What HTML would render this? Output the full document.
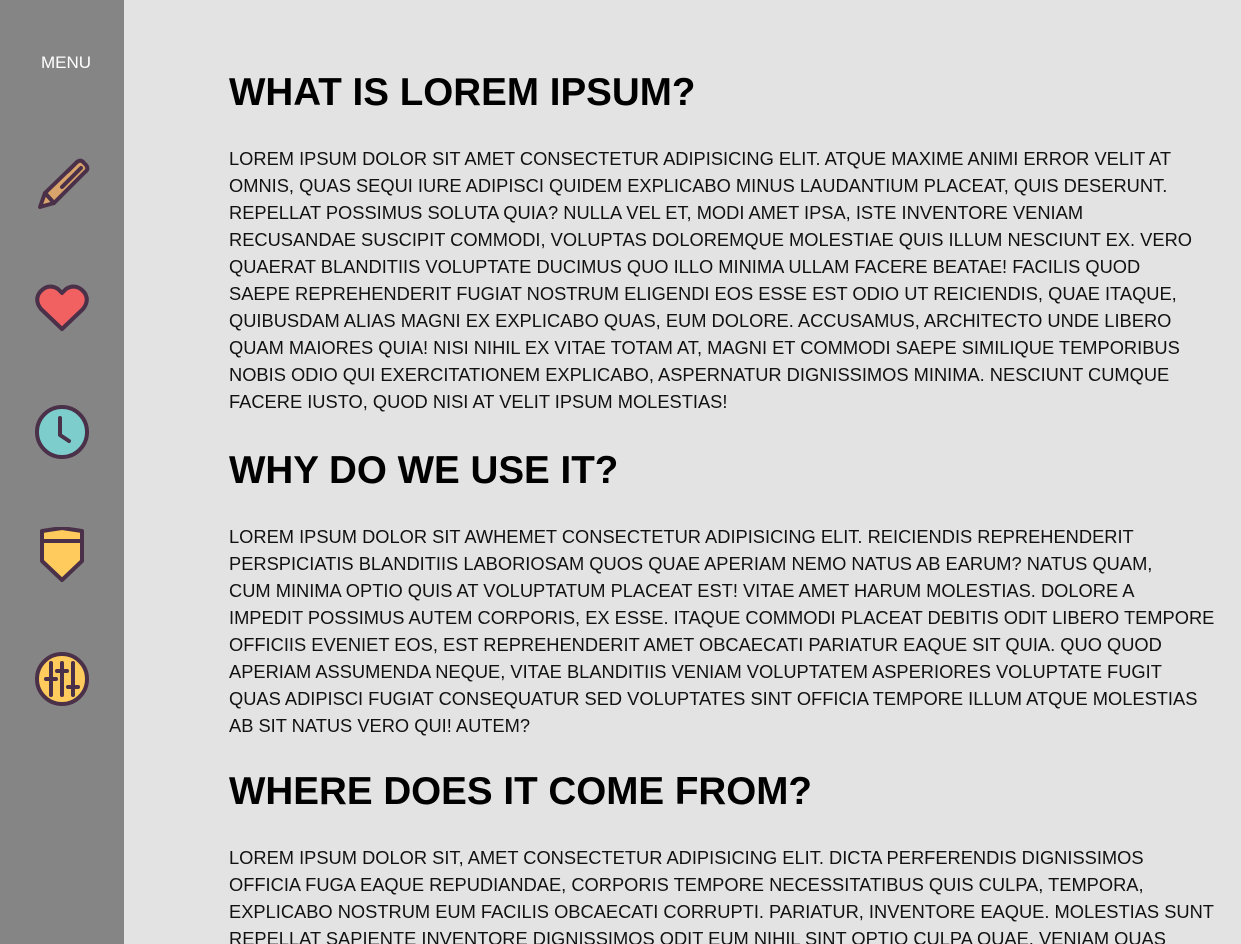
<!DOCTYPE html><html style="overflow:hidden"><head><style>
body{margin:0;width:1241px;height:944px;overflow:hidden;background:#e3e3e3;font-family:"Liberation Sans",sans-serif;color:#111;position:relative}
.side{position:absolute;left:0;top:0;width:124px;height:944px;background:#858585}
.menu{position:absolute;left:0;width:132px;top:53px;text-align:center;color:#fff;font-size:17px}
.ic{position:absolute;left:34px;width:56px;height:56px}
h1{position:absolute;left:229px;margin:0;font-size:38.6px;line-height:40px;font-weight:bold;color:#000;white-space:nowrap}
.p{position:absolute;left:229px;font-size:18.3px;line-height:27px;white-space:nowrap}
</style></head><body>
<div class="side">
<div class="menu">MENU</div>
<svg class="ic" style="top:157px" viewBox="0 0 56 56"><g stroke="#4a3048" stroke-width="4" stroke-linejoin="round" stroke-linecap="round"><path d="M6 50 L11 36 L43 5 Q47 2 50 6 L52 8 Q55 12 51 15 L20 46 Z" fill="#d9a46b"/><path d="M11 36 L20 46"/><path d="M34 14 L43 5"/><path d="M28 30 L47 11" /></g></svg>
<svg class="ic" style="top:280px" viewBox="0 0 56 56"><path d="M28 49 L7 29 Q0 20 6 12 Q14 3 24 9 L28 13 L32 9 Q42 3 50 12 Q56 20 49 29 Z" fill="#f26161" stroke="#4a3048" stroke-width="4" stroke-linejoin="round"/></svg>
<svg class="ic" style="top:404px" viewBox="0 0 56 56"><circle cx="28" cy="28" r="25" fill="#7ecdcd" stroke="#4a3048" stroke-width="4"/><path d="M26 14 V31 L35 37" fill="none" stroke="#4a3048" stroke-width="4" stroke-linecap="round" stroke-linejoin="round"/></svg>
<svg class="ic" style="top:527px" viewBox="0 0 56 56"><path d="M8 4 L28 1 L48 4 V34 L28 53 L8 34 Z" fill="#fecb5c" stroke="#4a3048" stroke-width="4" stroke-linejoin="round"/><path d="M8 14 H48" stroke="#4a3048" stroke-width="4"/></svg>
<svg class="ic" style="top:651px" viewBox="0 0 56 56"><circle cx="28" cy="28" r="25" fill="#fecb5c" stroke="#4a3048" stroke-width="4"/><g stroke="#4a3048" stroke-width="4" stroke-linecap="round"><path d="M17 12 V44 M12 28 H22 M28 12 V44 M23 20 H33 M39 12 V44 M34 36 H44"/></g></svg>
</div>
<h1 style="top:73px">WHAT IS LOREM IPSUM?</h1>
<div class="p" style="top:145px">LOREM IPSUM DOLOR SIT AMET CONSECTETUR ADIPISICING ELIT. ATQUE MAXIME ANIMI ERROR VELIT AT<br>OMNIS, QUAS SEQUI IURE ADIPISCI QUIDEM EXPLICABO MINUS LAUDANTIUM PLACEAT, QUIS DESERUNT.<br>REPELLAT POSSIMUS SOLUTA QUIA? NULLA VEL ET, MODI AMET IPSA, ISTE INVENTORE VENIAM<br>RECUSANDAE SUSCIPIT COMMODI, VOLUPTAS DOLOREMQUE MOLESTIAE QUIS ILLUM NESCIUNT EX. VERO<br>QUAERAT BLANDITIIS VOLUPTATE DUCIMUS QUO ILLO MINIMA ULLAM FACERE BEATAE! FACILIS QUOD<br>SAEPE REPREHENDERIT FUGIAT NOSTRUM ELIGENDI EOS ESSE EST ODIO UT REICIENDIS, QUAE ITAQUE,<br>QUIBUSDAM ALIAS MAGNI EX EXPLICABO QUAS, EUM DOLORE. ACCUSAMUS, ARCHITECTO UNDE LIBERO<br>QUAM MAIORES QUIA! NISI NIHIL EX VITAE TOTAM AT, MAGNI ET COMMODI SAEPE SIMILIQUE TEMPORIBUS<br>NOBIS ODIO QUI EXERCITATIONEM EXPLICABO, ASPERNATUR DIGNISSIMOS MINIMA. NESCIUNT CUMQUE<br>FACERE IUSTO, QUOD NISI AT VELIT IPSUM MOLESTIAS!</div>
<h1 style="top:451px">WHY DO WE USE IT?</h1>
<div class="p" style="top:523px">LOREM IPSUM DOLOR SIT AWHEMET CONSECTETUR ADIPISICING ELIT. REICIENDIS REPREHENDERIT<br>PERSPICIATIS BLANDITIIS LABORIOSAM QUOS QUAE APERIAM NEMO NATUS AB EARUM? NATUS QUAM,<br>CUM MINIMA OPTIO QUIS AT VOLUPTATUM PLACEAT EST! VITAE AMET HARUM MOLESTIAS. DOLORE A<br>IMPEDIT POSSIMUS AUTEM CORPORIS, EX ESSE. ITAQUE COMMODI PLACEAT DEBITIS ODIT LIBERO TEMPORE<br>OFFICIIS EVENIET EOS, EST REPREHENDERIT AMET OBCAECATI PARIATUR EAQUE SIT QUIA. QUO QUOD<br>APERIAM ASSUMENDA NEQUE, VITAE BLANDITIIS VENIAM VOLUPTATEM ASPERIORES VOLUPTATE FUGIT<br>QUAS ADIPISCI FUGIAT CONSEQUATUR SED VOLUPTATES SINT OFFICIA TEMPORE ILLUM ATQUE MOLESTIAS<br>AB SIT NATUS VERO QUI! AUTEM?</div>
<h1 style="top:772px">WHERE DOES IT COME FROM?</h1>
<div class="p" style="top:844px">LOREM IPSUM DOLOR SIT, AMET CONSECTETUR ADIPISICING ELIT. DICTA PERFERENDIS DIGNISSIMOS<br>OFFICIA FUGA EAQUE REPUDIANDAE, CORPORIS TEMPORE NECESSITATIBUS QUIS CULPA, TEMPORA,<br>EXPLICABO NOSTRUM EUM FACILIS OBCAECATI CORRUPTI. PARIATUR, INVENTORE EAQUE. MOLESTIAS SUNT<br>REPELLAT SAPIENTE INVENTORE DIGNISSIMOS ODIT EUM NIHIL SINT OPTIO CULPA QUAE, VENIAM QUAS</div>
</body></html>
